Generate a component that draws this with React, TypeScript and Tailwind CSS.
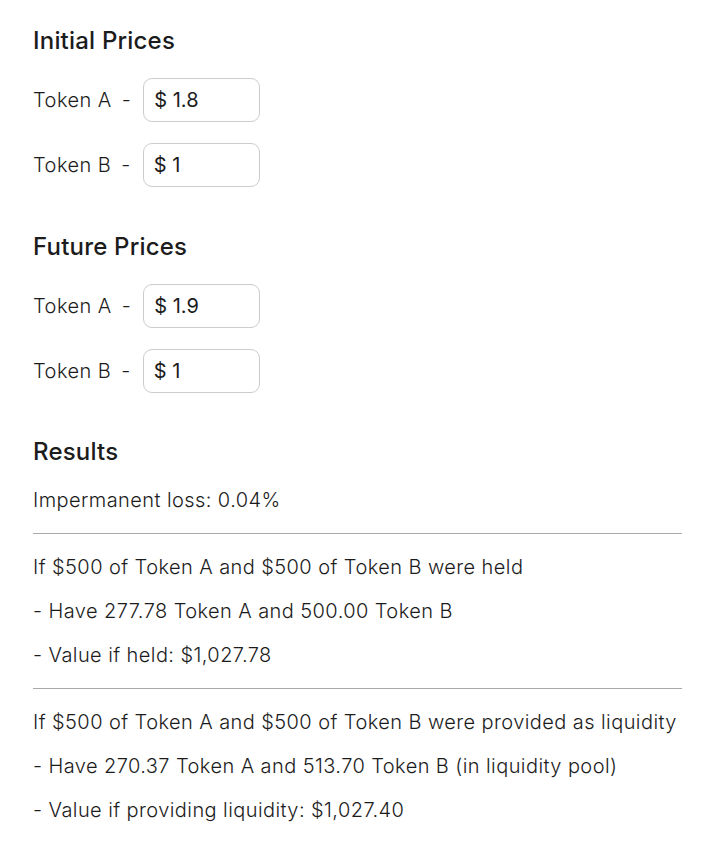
import React from "react";

const font = { fontFamily: 'Inter, "Open Sans", sans-serif' };

function PriceRow({ label, value }: { label: string; value: string }) {
  return (
    <div className="flex items-center text-[20px] tracking-[0.45px]">
      <span className="font-light">{label}</span>
      <span className="ml-[10px] font-light">-</span>
      <div className="ml-[12px] flex h-[44px] w-[117px] items-center rounded-[9px] border border-[#cccccc] px-[10px] font-normal tracking-[0px]">
        $ {value}
      </div>
    </div>
  );
}

function Section({ title, rows }: { title: string; rows: { label: string; value: string }[] }) {
  return (
    <section>
      <h2 className="text-[24px] font-medium leading-[30px] tracking-[0.2px]">{title}</h2>
      <div className="mt-[22px] flex flex-col gap-[21px]">
        {rows.map((r) => (
          <PriceRow key={r.label} {...r} />
        ))}
      </div>
    </section>
  );
}

export default function App() {
  return (
    <div className="min-h-screen bg-white pl-[33px] pr-[26px] pt-[26px] text-[#1c1c1c]" style={font}>
      <Section
        title="Initial Prices"
        rows={[
          { label: "Token A", value: "1.8" },
          { label: "Token B", value: "1" },
        ]}
      />
      <div className="mt-[45px]">
        <Section
          title="Future Prices"
          rows={[
            { label: "Token A", value: "1.9" },
            { label: "Token B", value: "1" },
          ]}
        />
      </div>
      <section className="mt-[44px]">
        <h2 className="text-[24px] font-medium leading-[30px] tracking-[0.2px]">Results</h2>
        <div className="mt-[11px] whitespace-nowrap text-[20px] font-light leading-[44px] tracking-[0.42px]">
          <p>Impermanent loss: 0.04%</p>
          <hr className="my-[11px] border-[#aaaaaa]" />
          <p>If $500 of Token A and $500 of Token B were held</p>
          <p>- Have 277.78 Token A and 500.00 Token B</p>
          <p>- Value if held: $1,027.78</p>
          <hr className="my-[11px] border-[#aaaaaa]" />
          <p>If $500 of Token A and $500 of Token B were provided as liquidity</p>
          <p>- Have 270.37 Token A and 513.70 Token B (in liquidity pool)</p>
          <p>- Value if providing liquidity: $1,027.40</p>
        </div>
      </section>
    </div>
  );
}
